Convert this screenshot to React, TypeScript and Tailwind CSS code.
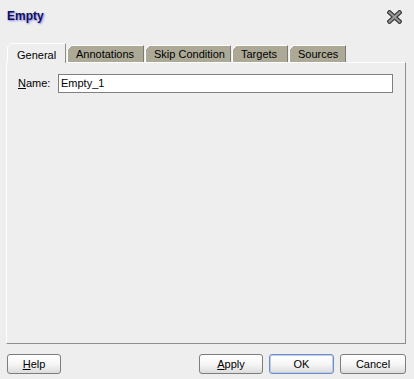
import React from "react";

const font = { fontFamily: '"Liberation Sans", Arial, sans-serif' };

function Corner({ bg }: { bg: string }) {
  return (
    <svg className="absolute left-[-1px] top-[-1px]" width="5" height="5" viewBox="0 0 5 5">
      <polygon points="0,0 5,0 0,5" fill={bg} />
      <line x1="0" y1="5" x2="5" y2="0" stroke="#ffffff" strokeWidth="1" />
    </svg>
  );
}

function Tab({ label, w, active }: { label: string; w: string; active?: boolean }) {
  if (active) {
    return (
      <div
        className={`relative z-10 ${w} h-[20px] mb-[-1px] bg-[#eeeeee] border-t border-l border-r border-t-white border-l-white border-r-[#8e8e8e] text-[11px] leading-[13px] text-black pt-[5px] pl-[9px]`}
      >
        <Corner bg="#eeeeee" />
        {label}
      </div>
    );
  }
  return (
    <div
      className={`relative ${w} h-[17px] bg-[#acaa97] border-t border-l border-r border-t-white border-l-white border-r-[#7c7b70] text-[11px] leading-[13px] text-black pt-[2px] pl-[8px]`}
    >
      <Corner bg="#eeeeee" />
      {label}
    </div>
  );
}

function Btn({ label, u, w, focus }: { label: string; u?: number; w: string; focus?: boolean }) {
  const pre = u === undefined ? label : label.slice(0, u);
  const mid = u === undefined ? "" : label[u];
  const post = u === undefined ? "" : label.slice(u + 1);
  return (
    <div
      className={`${w} h-[20px] rounded-[3px] border ${
        focus ? "border-[#6f8fc0] shadow-[inset_0_0_0_1px_#b9cdee]" : "border-[#7d7d7d]"
      } bg-gradient-to-b from-white via-[#f6f6f6] to-[#dcdcdc] flex items-center justify-center text-[11px] leading-[13px] text-black`}
    >
      <span>
        {pre}
        {mid && <span className="underline">{mid}</span>}
        {post}
      </span>
    </div>
  );
}

export default function App() {
  return (
    <div className="w-[414px] h-[379px] bg-[#eeeeee] flex flex-col overflow-hidden" style={font}>
      <div className="h-[43px] flex items-start justify-between shrink-0">
        <div
          className="pt-[8px] pl-[7px] text-[12px] leading-[16px] font-bold text-[#12124a] [text-shadow:1px_1px_2px_#7a7aff]"
        >
          Empty
        </div>
        <svg className="mt-[10px] mr-[12px]" width="15" height="14" viewBox="0 0 15 14">
          <line x1="2.5" y1="2.5" x2="12.5" y2="11.5" stroke="#3a3a3a" strokeWidth="4.5" strokeLinecap="square" />
          <line x1="12.5" y1="2.5" x2="2.5" y2="11.5" stroke="#3a3a3a" strokeWidth="4.5" strokeLinecap="square" />
          <line x1="2.5" y1="2.5" x2="12.5" y2="11.5" stroke="#9a9a9a" strokeWidth="2" strokeLinecap="square" />
          <line x1="12.5" y1="2.5" x2="2.5" y2="11.5" stroke="#9a9a9a" strokeWidth="2" strokeLinecap="square" />
        </svg>
      </div>

      <div className="flex items-end h-[19px] pl-[7px] gap-[1px] shrink-0">
        <Tab label="General" w="w-[59px]" active />
        <Tab label="Annotations" w="w-[77px]" />
        <Tab label="Skip Condition" w="w-[86px]" />
        <Tab label="Targets" w="w-[56px]" />
        <Tab label="Sources" w="w-[57px]" />
      </div>

      <div className="ml-[6px] w-[400px] h-[282px] shrink-0 border-t border-l border-r border-b border-t-white border-l-white border-r-[#8e8e8e] border-b-[#8e8e8e]">
        <div className="flex items-center mt-[11px] pl-[11px]">
          <span className="w-[40px] text-[11px] leading-[13px] text-black">
            <span className="underline">N</span>ame:
          </span>
          <div className="w-[335px] h-[19px] bg-white border border-[#7f7f7f] flex items-center pl-[2px] text-[11px] leading-[13px] text-black">
            Empty_1
          </div>
        </div>
      </div>

      <div className="flex items-center mt-[10px] pl-[7px] pr-[8px]">
        <Btn label="Help" u={0} w="w-[54px]" />
        <div className="flex-1" />
        <div className="flex gap-[6px]">
          <Btn label="Apply" u={0} w="w-[64px]" />
          <Btn label="OK" w="w-[65px]" focus />
          <Btn label="Cancel" w="w-[66px]" />
        </div>
      </div>
    </div>
  );
}
